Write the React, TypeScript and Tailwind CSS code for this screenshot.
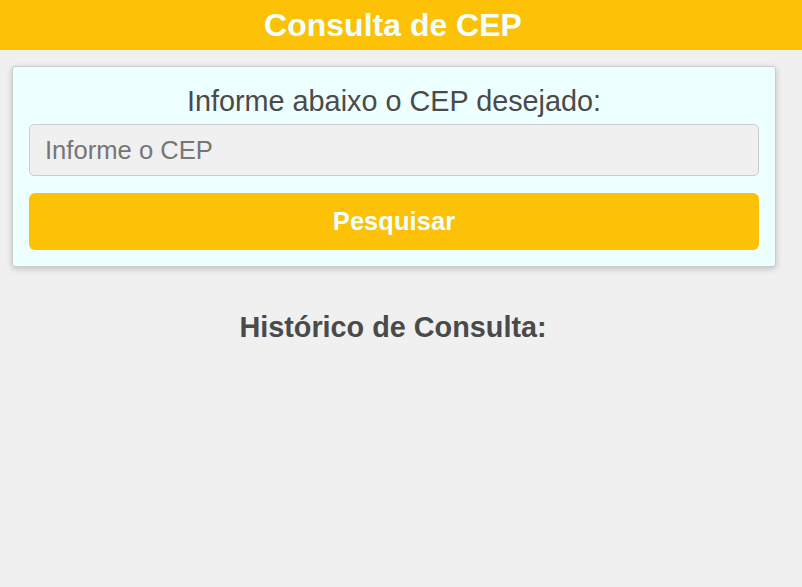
export default function App() {
  return (
    <div className="min-h-[587px] bg-[#f0f0f0] font-['Liberation_Sans',Arial,sans-serif]">
      <header className="h-[50px] bg-[#fdc107]">
        <div className="flex h-full w-[786px] items-center justify-center">
          <h1 className="text-[32px] font-bold leading-none text-[#f0ffff]">Consulta de CEP</h1>
        </div>
      </header>

      <main className="w-[786px] pt-4">
        <div className="ml-3 mr-[10px] rounded-[3px] border border-[#cccccc] bg-[#eeffff] px-4 pt-[14px] pb-4 shadow-[0_2px_6px_rgba(0,0,0,0.2)]">
          <p className="text-center text-[28.8px] leading-[40px] text-[#4a4a4a]">
            Informe abaixo o CEP desejado:
          </p>
          <input
            type="text"
            placeholder="Informe o CEP"
            className="mt-[3px] block h-[52px] w-full rounded-[5px] border border-[#cccccc] bg-[#f0f0f0] px-[15px] text-[25.6px] text-[#4a4a4a] outline-none placeholder:text-[#767676]"
          />
          <button className="mt-[17px] block h-[57px] w-full rounded-[6px] bg-[#fdc107] text-[25.6px] font-bold text-[#f0ffff]">
            Pesquisar
          </button>
        </div>

        <h2 className="mt-[40px] text-center text-[28.8px] font-bold leading-[40px] text-[#4a4a4a]">
          Histórico de Consulta:
        </h2>
      </main>
    </div>
  );
}
